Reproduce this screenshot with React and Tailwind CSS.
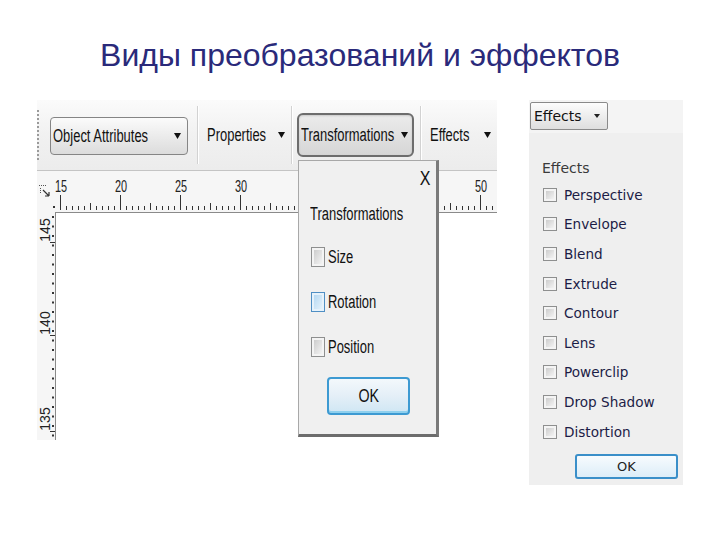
import React from "react";

const Tri = () => (
  <svg width="7" height="6" viewBox="0 0 7 6" className="shrink-0">
    <path d="M0 0H7L3.5 6Z" fill="#111" />
  </svg>
);

const SmallTri = () => (
  <svg width="6" height="4" viewBox="0 0 6 4" className="shrink-0">
    <path d="M0 0H6L3 4Z" fill="#222" />
  </svg>
);

const Cond = ({ children, w, className = "" }) => (
  <span className={`block shrink-0 whitespace-nowrap ${className}`} style={{ width: w }}>
    <span className="inline-block origin-left scale-x-[0.72] whitespace-nowrap">{children}</span>
  </span>
);

const Sep = () => (
  <div className="h-[58px] w-[2px] shrink-0 border-l border-[#d2d2d2] border-r border-r-white" />
);

function TopRuler() {
  const ticks = [];
  for (let k = 0; 5 + 6 * k < 442; k++) {
    const x = 5 + 6 * k + 0.5;
    const h = k % 10 === 0 ? 15 : k % 5 === 0 ? 7 : 4;
    ticks.push(<line key={k} x1={x} x2={x} y1={39 - h} y2={39} stroke="#333" strokeWidth="1" />);
  }
  const labels = [
    [15, 0],
    [20, 1],
    [25, 2],
    [30, 3],
    [50, 7],
  ].map(([n, i]) => (
    <text
      key={n}
      x={0}
      y={0}
      fontSize="16"
      fontFamily="Liberation Sans, Arial, sans-serif"
      fill="#222"
      textAnchor="middle"
      transform={`translate(${5 + 60 * i + 1} 21) scale(0.68 1)`}
    >
      {n}
    </text>
  ));
  return (
    <svg width="442" height="41" viewBox="0 0 442 41" className="block">
      {ticks}
      {labels}
    </svg>
  );
}

function LeftRuler() {
  const dots = [];
  for (let k = 0; k < 24; k++) {
    dots.push(<rect key={k} x="15" y={4 + k * 9.5} width="2" height="2" fill="#333" />);
  }
  const labels = [
    ["145", 18],
    ["140", 111],
    ["135", 207],
  ].map(([t, y]) => (
    <g key={t}>
      <text
        x={0}
        y={0}
        fontSize="14"
        fontFamily="Liberation Sans, Arial, sans-serif"
        fill="#222"
        textAnchor="middle"
        transform={`translate(12.5 ${y}) rotate(-90)`}
      >
        {t}
      </text>
      <line x1="13" x2="18" y1={y + 12.5} y2={y + 12.5} stroke="#333" />
    </g>
  ));
  return (
    <svg width="18" height="228" viewBox="0 0 18 228" className="block">
      {dots}
      {labels}
    </svg>
  );
}

const Corner = () => (
  <svg width="18" height="41" viewBox="0 0 18 41" className="block">
    <g fill="#555">
      <rect x="2" y="14" width="1" height="1" />
      <rect x="4" y="14" width="1" height="1" />
      <rect x="6" y="14" width="1" height="1" />
      <rect x="8" y="14" width="1" height="1" />
      <rect x="3" y="17" width="1" height="1" />
      <rect x="3" y="19" width="1" height="1" />
      <rect x="3" y="21" width="1" height="1" />
    </g>
    <path d="M6 19L12 25M12 25V21M12 25H8" stroke="#333" strokeWidth="1.2" fill="none" />
    <rect x="16" y="35" width="2" height="2" fill="#333" />
  </svg>
);

const WinCheck = ({ tall, hover }) => (
  <div
    className={`shrink-0 border p-[2px] ${tall ? "h-[20px] w-[14px]" : "h-[14px] w-[14px]"} ${
      hover ? "border-[#4f8fc4] bg-[#e6f2fb]" : "border-[#8e8f8f] bg-[#f4f4f4]"
    }`}
  >
    <div
      className={`h-full w-full bg-linear-to-br ${
        hover ? "from-[#b6d9f2] to-[#e3f1fb]" : "from-[#cdcdcd] to-[#f3f3f3]"
      }`}
    />
  </div>
);

const PopRow = ({ label, hover, mt }) => (
  <div className={`flex h-[20px] items-center gap-[3px] pl-[12px] ${mt}`}>
    <WinCheck tall hover={hover} />
    <Cond w="60px" className="text-[18px] leading-[20px] text-[#111]">
      {label}
    </Cond>
  </div>
);

const effects = [
  "Perspective",
  "Envelope",
  "Blend",
  "Extrude",
  "Contour",
  "Lens",
  "Powerclip",
  "Drop Shadow",
  "Distortion",
];

export default function App() {
  return (
    <div className="relative h-[540px] w-[720px] overflow-hidden bg-white font-['Liberation_Sans',Arial,sans-serif]">
      <div className="h-[100px] pt-[37px]">
        <h1 className="text-center text-[32px] leading-[36px] font-normal text-[#2a2a7a]">
          Виды преобразований и эффектов
        </h1>
      </div>

      <div className="flex items-start">
        {/* Left screenshot */}
        <div className="relative ml-[37px] h-[340px] w-[460px] shrink-0 overflow-hidden bg-white">
          <div className="flex h-[71px] items-center border-b border-[#c4c4c4] bg-linear-to-b from-[#fbfbfb] via-[#f1f1f1] to-[#ececec] text-[18px] leading-[22px] text-[#111]">
            <div className="h-[50px] w-[2px] shrink-0 border-l-2 border-dotted border-[#9a9a9a]" />
            <div className="ml-[11px] mt-[2px] flex h-[38px] w-[138px] shrink-0 items-center justify-between rounded-[4px] border border-[#858585] bg-linear-to-b from-[#fbfbfb] to-[#dcdcdc] pl-[2px] pr-[6px]">
              <Cond w="100px">Object Attributes</Cond>
              <Tri />
            </div>
            <div className="ml-[9px]">
              <Sep />
            </div>
            <div className="ml-[8px] flex w-[78px] shrink-0 items-center justify-between">
              <Cond w="60px">Properties</Cond>
              <Tri />
            </div>
            <div className="ml-[6px]">
              <Sep />
            </div>
            <div className="ml-[4px] flex h-[44px] w-[117px] shrink-0 items-center justify-between rounded-[6px] border-2 border-[#6d6d6d] bg-linear-to-b from-[#ececec] to-[#d6d6d6] pl-[2px] pr-[4px] shadow-[inset_0_1px_2px_rgba(0,0,0,0.15)]">
              <Cond w="92px">Transformations</Cond>
              <Tri />
            </div>
            <div className="ml-[6px]">
              <Sep />
            </div>
            <div className="ml-[8px] flex w-[61px] shrink-0 items-center justify-between">
              <Cond w="42px">Effects</Cond>
              <Tri />
            </div>
          </div>

          <div className="grid grid-cols-[18px_442px] grid-rows-[41px_228px] bg-[#f6f6f6]">
            <Corner />
            <TopRuler />
            <LeftRuler />
            <div className="border-l border-t border-[#8a8a8a] bg-white" />
          </div>

          {/* Transformations popup */}
          <div className="absolute left-[261px] top-[60px] flex h-[277px] w-[141px] flex-col border-l border-t border-[#a8a8a8] border-b-[3px] border-r-[3px] border-b-[#6c6c6c] border-r-[#7a7a7a] bg-[#f0f0f0] text-[#111]">
            <div className="mt-[7px] flex h-[20px] justify-end pr-[6px]">
              <span className="inline-block origin-right scale-x-[0.8] text-[20px] leading-[20px]">X</span>
            </div>
            <div className="mt-[16px] h-[20px] pl-[11px]">
              <Cond w="92px" className="text-[18px] leading-[20px]">
                Transformations
              </Cond>
            </div>
            <PopRow label="Size" mt="mt-[23px]" />
            <PopRow label="Rotation" hover mt="mt-[25px]" />
            <PopRow label="Position" mt="mt-[25px]" />
            <div className="ml-[28px] mt-[20px] flex h-[38px] w-[83px] items-center justify-center rounded-[4px] border-2 border-[#3d9ad2] bg-linear-to-b from-[#f3f8fc] via-[#e4eff7] to-[#cfe6f4] shadow-[inset_0_-2px_0_#8fd0ee]">
              <span className="inline-block scale-x-[0.75] text-[19px] leading-[20px]">OK</span>
            </div>
          </div>
        </div>

        {/* Right effects panel */}
        <div className="ml-[32px] flex h-[385px] w-[154px] shrink-0 flex-col bg-[#efefef] font-['DejaVu_Sans',Verdana,sans-serif]">
          <div className="h-[33px] bg-[#f4f4f4] pl-[1px] pt-[2px]">
            <div className="flex h-[28px] w-[78px] items-center justify-between rounded-[2px] border border-[#8a8a8a] bg-linear-to-b from-[#fdfdfd] to-[#dedede] pl-[3px] pr-[7px]">
              <span className="text-[14px] leading-[18px] text-[#111]">Effects</span>
              <SmallTri />
            </div>
          </div>
          <div className="ml-[13px] mt-[26px] h-[18px] text-[14px] leading-[18px] text-[#3a3a3a]">Effects</div>
          <div className="mt-[3px] flex flex-col">
            {effects.map((e) => (
              <div key={e} className="flex h-[29.6px] items-center gap-[7px] pl-[14px]">
                <WinCheck />
                <span className="text-[13.6px] leading-[18px] text-[#1c1c46]">{e}</span>
              </div>
            ))}
          </div>
          <div className="ml-[46px] mt-[8px] flex h-[25px] w-[103px] items-center justify-center rounded-[3px] border-2 border-[#3a8fc9] bg-linear-to-b from-[#f7fbfe] to-[#dcedf8]">
            <span className="text-[13px] leading-[16px] text-[#222]">OK</span>
          </div>
        </div>
      </div>
    </div>
  );
}
